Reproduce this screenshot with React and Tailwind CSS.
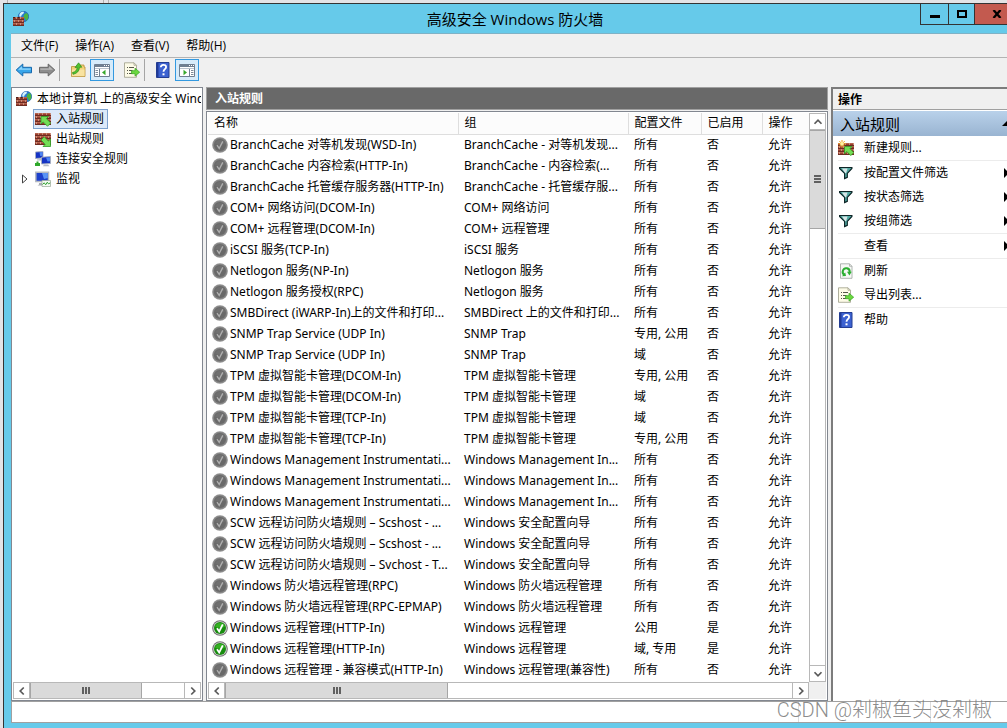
import React from "react";

const ANY = "所有";
const RULES = [
  ["BranchCache 对等机发现(WSD-In)", "BranchCache - 对等机发现...", ANY],
  ["BranchCache 内容检索(HTTP-In)", "BranchCache - 内容检索(...", ANY],
  ["BranchCache 托管缓存服务器(HTTP-In)", "BranchCache - 托管缓存服...", ANY],
  ["COM+ 网络访问(DCOM-In)", "COM+ 网络访问", ANY],
  ["COM+ 远程管理(DCOM-In)", "COM+ 远程管理", ANY],
  ["iSCSI 服务(TCP-In)", "iSCSI 服务", ANY],
  ["Netlogon 服务(NP-In)", "Netlogon 服务", ANY],
  ["Netlogon 服务授权(RPC)", "Netlogon 服务", ANY],
  ["SMBDirect (iWARP-In)上的文件和打印...", "SMBDirect 上的文件和打印...", ANY],
  ["SNMP Trap Service (UDP In)", "SNMP Trap", "专用, 公用"],
  ["SNMP Trap Service (UDP In)", "SNMP Trap", "域"],
  ["TPM 虚拟智能卡管理(DCOM-In)", "TPM 虚拟智能卡管理", "专用, 公用"],
  ["TPM 虚拟智能卡管理(DCOM-In)", "TPM 虚拟智能卡管理", "域"],
  ["TPM 虚拟智能卡管理(TCP-In)", "TPM 虚拟智能卡管理", "域"],
  ["TPM 虚拟智能卡管理(TCP-In)", "TPM 虚拟智能卡管理", "专用, 公用"],
  ["Windows Management Instrumentati...", "Windows Management In...", ANY],
  ["Windows Management Instrumentati...", "Windows Management In...", ANY],
  ["Windows Management Instrumentati...", "Windows Management In...", ANY],
  ["SCW 远程访问防火墙规则 – Scshost - ...", "Windows 安全配置向导", ANY],
  ["SCW 远程访问防火墙规则 – Scshost - ...", "Windows 安全配置向导", ANY],
  ["SCW 远程访问防火墙规则 – Svchost - T...", "Windows 安全配置向导", ANY],
  ["Windows 防火墙远程管理(RPC)", "Windows 防火墙远程管理", ANY],
  ["Windows 防火墙远程管理(RPC-EPMAP)", "Windows 防火墙远程管理", ANY],
  ["Windows 远程管理(HTTP-In)", "Windows 远程管理", "公用", true],
  ["Windows 远程管理(HTTP-In)", "Windows 远程管理", "域, 专用", true],
  ["Windows 远程管理 - 兼容模式(HTTP-In)", "Windows 远程管理(兼容性)", ANY],
];

function Svg({ children, className = "" }) {
  return (
    <svg viewBox="0 0 16 16" className={"h-4 w-4 shrink-0 " + className} aria-hidden="true">
      {children}
    </svg>
  );
}

function Bricks({ x = 0, y = 2, w = 16, h = 12 }) {
  const rows = [];
  for (let i = 0; i < h / 3; i++) {
    const top = y + i * 3;
    rows.push(<path key={"t" + i} d={`M${x} ${top + 0.5}H${x + w}`} stroke="#b5614d" />);
    rows.push(<path key={"h" + i} d={`M${x} ${top + 2.5}H${x + w}`} stroke="#6d2c22" />);
    for (let c = i % 2 ? 1.5 : 3.5; c < w; c += 4) {
      rows.push(<path key={i + "-" + c} d={`M${x + c} ${top}v2`} stroke="#d09a88" strokeWidth=".8" />);
    }
  }
  return (
    <g>
      <rect x={x} y={y} width={w} height={h} fill="#99402f" />
      {rows}
    </g>
  );
}

const FirewallIcon = () => (
  <Svg>
    <circle cx="10.5" cy="5.5" r="5.2" fill="#2878d2" stroke="#1b5aa6" strokeWidth=".6" />
    <path d="M7 2.2c1.500-1.500 3-1.600 4-1.200l-.6 1.800-1.600 1-.8 2-1.600-.4c-.3-1.300 0-2.300.6-3.200z" fill="#d5f1fa" />
    <path d="M12 2.500l2.200-.3c1.200 1.800 1.500 3.900.6 5.800l-1.800 2-1-2.400-1.500-1.500.4-1.800z" fill="#49b543" />
    <Bricks x={0} y={6} w={11} h={9} />
    <path d="M0 6h2v1.200H0zM4.500 6h2.200v1.200H4.500z" fill="#4a1f1a" />
  </Svg>
);

const GREEN = "#74dd55";
const InboundIcon = () => (
  <Svg>
    <Bricks />
    <path d="M6 5.500h7.500l-2 2.200 4.200 4.300-3.200 3.300-4.300-4.400L6 13z" fill={GREEN} stroke="#2f9a24" strokeWidth=".8" />
  </Svg>
);
const OutboundIcon = () => (
  <Svg>
    <Bricks />
    <path d="M15.500 15.500H8l2.200-2.200L6 9l3.200-3.200 4.200 4.300 2.100-2.100z" fill={GREEN} stroke="#2f9a24" strokeWidth=".8" />
  </Svg>
);
const NewRuleIcon = () => (
  <Svg>
    <Bricks y={3} />
    <path d="M6.500 6.500H14l-2 2.200 3.800 3.900-3 3-3.900-4-2.400 2.200z" fill={GREEN} stroke="#2f9a24" strokeWidth=".8" />
    <path d="M4 0v7.600M.2 3.800h7.600M1.300 1.100l5.400 5.400M6.700 1.100L1.300 6.500" stroke="#f0a01c" />
    <circle cx="4" cy="3.800" r="1.900" fill="#fff2a0" />
  </Svg>
);
const ConnectionIcon = () => (
  <Svg>
    <path d="M.5 1L8 .5v6.500l-7.500.500z" fill="#1533c4" stroke="#a8b0c0" strokeWidth=".9" />
    <path d="M4.500 1.300l3-.2v3.700l-2.300.2z" fill="#4e86f2" />
    <path d="M2 8.500l4-.5.500 1.500H2z" fill="#b5bac5" />
    <path d="M6.500 6.200l9-.7v7l-9 .5z" fill="#1533c4" stroke="#a8b0c0" strokeWidth=".9" />
    <path d="M11 6.500l4-.3v4l-2.500.3z" fill="#4e86f2" />
    <path d="M9 13.500h4l1.500 1.700H8z" fill="#b5bac5" />
    <path d="M0 15v-3h1.500v-1.500h2V12H5v3z" fill="#2fa82a" />
  </Svg>
);
const MonitorIcon = () => (
  <Svg>
    <path d="M.8 1.200h12.700v9.300H.8z" fill="#1c3fcb" stroke="#b4b9c2" strokeWidth="1.500" />
    <path d="M7 2h5.800v5L9 8z" fill="#5a93f5" />
    <path d="M4 12h4v1.500l1.500 1h-7L4 13.500z" fill="#a9adb4" />
    <path d="M7 9.500h8.500v6H7z" fill="#f4faf3" stroke="#9aa79a" strokeWidth=".7" />
    <path d="M7.500 13.500l1.700-1.700 1.500 2 1.600-2.600 1.200 1.700 1.700-1" fill="none" stroke="#35a435" />
  </Svg>
);
const BackIcon = () => (
  <svg viewBox="0 0 18 16" className="h-4 w-[18px]" aria-hidden="true">
    <path d="M1.200 8l6.600-6v3.300h8.700v5.500H7.800V14z" fill="#38a6ea" stroke="#1668ad" />
    <path d="M3 7.800l3.900-3.600v2.300h8.700v1.300z" fill="#92d6fb" />
  </svg>
);
const ForwardIcon = () => (
  <svg viewBox="0 0 18 16" className="h-4 w-[18px]" aria-hidden="true">
    <path d="M16.800 8l-6.600-6v3.300H1.500v5.500h8.700V14z" fill="#8d8d8d" stroke="#666" />
    <path d="M15 7.800l-3.900-3.600v2.300H2.400v1.300z" fill="#b9b9b9" />
  </svg>
);
const FolderUpIcon = () => (
  <Svg>
    <path d="M1.500 4.500h5l1-1.500H14v2h1v9.500H1.500z" fill="#f3d277" stroke="#b8903a" strokeWidth=".8" />
    <path d="M2 7.500h12.500v6.600H2z" fill="#f9e3a0" />
    <path d="M2.500 10.500c3-.5 4.500-2.500 4.700-5.200L5 5.500 8.600.8l3.200 4.400-2.300.1c-.3 4-2.500 6.200-6.500 7z" fill="#52c32f" stroke="#2d8d1d" strokeWidth=".7" />
  </Svg>
);
const PanelIcon = ({ right }) => (
  <Svg>
    <path d="M.5 2.500h15v12H.5z" fill="#fff" stroke="#6f7f91" />
    <path d="M1 4h14" stroke="#6f7f91" strokeWidth="2" />
    <path d="M10 3.500h1m1 0h1m1 0h1" stroke="#fff" />
    <path d="M1 6.500h14" stroke="#b9c3cd" />
    <path d={right ? "M10.500 7v7" : "M5.500 7v7"} stroke="#6f7f91" />
    <path d={right ? "M12 8.500h2.500m-2.500 2h2.500m-2.500 2h2.500" : "M1.500 8.500H4m-2.500 2H4m-2.500 2H4"} stroke="#7d8b9a" />
    <path d={right ? "M4.500 7.800v5.400L8 10.500z" : "M11.500 7.800v5.400L8 10.500z"} fill="#36a82b" />
  </Svg>
);
const ExportIcon = () => (
  <Svg>
    <path d="M.5.8H10l2.500 2.500v12H.5z" fill="#fdfbe7" stroke="#9c9c88" strokeWidth=".8" />
    <path d="M10 .8v2.500h2.500" fill="none" stroke="#9c9c88" strokeWidth=".7" />
    <path d="M3 5.500h1m1 0h5M3 8.500h1m1 0h3.500M3 11.500h1m1 0h3.500" stroke="#55564a" />
    <path d="M7.500 8.700H11V6.200l4.700 4-4.700 4v-2.500H7.500z" fill="#6bd83f" stroke="#36a321" strokeWidth=".7" />
  </Svg>
);
const RefreshIcon = () => (
  <Svg>
    <path d="M2.500.8h9L14 3.300v12H2.500z" fill="#f7f8f6" stroke="#9da3a0" strokeWidth=".8" />
    <path d="M11.500.8v2.500H14" fill="none" stroke="#9da3a0" strokeWidth=".7" />
    <path d="M6.500 11.800A3.500 3.500 0 1 1 11.700 9" fill="none" stroke="#2cae32" strokeWidth="2" />
    <path d="M9 8.800h4.700l-2.300 3.600z" fill="#2cae32" />
    <path d="M4 13.200l4-.2-.8-3.600z" fill="#2cae32" />
  </Svg>
);
const HelpIcon = () => (
  <Svg>
    <path d="M1.500.5H14v15H1.500z" fill="#3c62d1" stroke="#233d92" />
    <path d="M2 1h1.500v14H2z" fill="#203a98" />
    <path d="M5.800 5.200c0-3 5.300-3.200 5.300-.2 0 2.100-2.600 2.200-2.600 4.700" fill="none" stroke="#fff" strokeWidth="1.800" />
    <path d="M7.500 11.300h2v2h-2z" fill="#fff" />
  </Svg>
);
const FilterIcon = () => (
  <Svg>
    <path d="M1 2h13v1.500L9.200 8.500v4l-2.900 1.300V8.500L1 3.500z" fill="#4fa8a2" />
    <path d="M4 3.500h5.500L8 8.500 7 8z" fill="#d9e6e6" />
    <path d="M1.600 2.500h12.300v1L9.300 8.400v4l-2.700 1.200V8.400L1.600 3.500z" fill="none" stroke="#0f2527" strokeWidth="1.200" />
  </Svg>
);
const RuleIcon = ({ on }) => (
  <Svg>
    <circle cx="8" cy="8" r="7.800" fill={on ? "#707070" : "#8f8f8f"} />
    <circle cx="8" cy="8" r="6.800" fill={on ? "#d6d6d6" : "#808080"} />
    <circle cx="8" cy="8" r="6" fill={on ? "#178c0e" : "#696969"} />
    <path d="M3 6.500a5.300 5.300 0 0 1 10 0c-3 1.600-7 1.600-10 0z" fill={on ? "#35b022" : "#707070"} />
    <path d="M5 8.200l2.200 3.200 3.600-7" fill="none" stroke={on ? "#fff" : "#b0b0b0"} strokeWidth={on ? 1.8 : 1.3} />
  </Svg>
);

const ARROWS = { left: "M10 4L6 8l4 4", right: "M6 4l4 4-4 4", up: "M4 10l4-4 4 4", down: "M4 6l4 4 4-4" };

function ScrollArrow({ dir, label }) {
  return (
    <button aria-label={label} className="flex h-[17px] w-[17px] shrink-0 items-center justify-center border border-[#b8b8b8] bg-white">
      <svg viewBox="0 0 16 16" className="h-[14px] w-[14px]" aria-hidden="true">
        <path d={ARROWS[dir]} fill="none" stroke="#5a5a5a" strokeWidth="2" />
      </svg>
    </button>
  );
}

function HScroll({ thumb }) {
  return (
    <div className="flex h-[17px] min-w-0 flex-1 bg-white">
      <ScrollArrow dir="left" label="向左滚动" />
      <div className="flex flex-1 border-y border-[#b8b8b8]">
        <div className={"flex items-center justify-center gap-px border-x border-[#a6a6a6] bg-[#dadada] " + thumb}>
          <i className="h-[7px] w-0.5 bg-[#606060]" />
          <i className="h-[7px] w-0.5 bg-[#606060]" />
          <i className="h-[7px] w-0.5 bg-[#606060]" />
        </div>
      </div>
      <ScrollArrow dir="right" label="向右滚动" />
    </div>
  );
}

function VScroll() {
  return (
    <div className="flex w-[17px] shrink-0 flex-col bg-white">
      <ScrollArrow dir="up" label="向上滚动" />
      <div className="flex-1 border-x border-[#b8b8b8]">
        <div className="flex h-[18.5%] flex-col items-center justify-center gap-px border-y border-[#a6a6a6] bg-[#dadada]">
          <i className="h-0.5 w-[7px] bg-[#606060]" />
          <i className="h-0.5 w-[7px] bg-[#606060]" />
          <i className="h-0.5 w-[7px] bg-[#606060]" />
        </div>
      </div>
      <ScrollArrow dir="down" label="向下滚动" />
    </div>
  );
}

function TreeItem({ icon, label, selected, expander }) {
  return (
    <li className="flex h-5 items-center">
      <span className="flex w-5 shrink-0 items-center justify-end pr-[5px]">
        {expander && (
          <svg viewBox="0 0 6 10" className="h-[10px] w-[6px]" aria-hidden="true">
            <path d="M.5 1v8L5 5z" fill="#fff" stroke="#444" />
          </svg>
        )}
      </span>
      <button
        className={
          "flex h-5 items-center gap-[5px] border px-px " +
          (selected ? "border-[#7da2ce] bg-[#dce9f9]" : "border-transparent")
        }
      >
        {icon}
        <span className="pr-[2px]">{label}</span>
      </button>
    </li>
  );
}

function ActionItem({ icon, label, more }) {
  return (
    <button className="flex h-6 w-full items-center gap-[10px] pl-[5px] text-left">
      {icon || <span className="w-4" />}
      <span className="flex-1">{label}</span>
      {more && (
        <svg viewBox="0 0 3 10" className="h-[10px] w-[3px]" aria-hidden="true">
          <path d="M0 0l3 3v4l-3 3z" fill="#000" />
        </svg>
      )}
    </button>
  );
}

const Rule = () => <hr className="ml-[5px] border-t border-[#ececec]" />;
const ToolSep = ({ className = "" }) => <span className={"h-[22px] w-px bg-[#a5a5a5] " + className} />;

export default function App() {
  return (
    <div className="relative flex h-screen w-full flex-col overflow-hidden bg-[#e3e3e6] font-['Noto_Sans','Noto_Sans_CJK_SC',sans-serif] text-xs leading-5 text-black">
      <div className="flex h-[3px] shrink-0">
        <span className="w-2 border-r border-[#b0b0b0]" />
        <span className="w-24 border-r border-[#b0b0b0]" />
        <span className="w-[5px] border-r border-[#b0b0b0]" />
      </div>
      <main className="ml-[3px] flex min-h-0 flex-1 flex-col border-t border-l border-[#333] bg-[#66caea] pb-[5px]">
        <header className="flex h-[29px] shrink-0 items-start">
          <div className="flex h-full w-[106px] items-center pl-[9px]">
            <FirewallIcon />
          </div>
          <h1 className="flex-1 self-center text-center font-['Open_Sans','Noto_Sans_CJK_SC',sans-serif] text-[15px] leading-6">
            高级安全 Windows 防火墙
          </h1>
          <div className="flex h-[21px] border-b border-l border-[#333]">
            <button aria-label="最小化" className="flex w-7 items-center justify-center border-r border-[#333]">
              <span className="mt-1 h-[3px] w-[10px] bg-black" />
            </button>
            <button aria-label="最大化" className="flex w-[26px] items-center justify-center border-r border-[#333]">
              <span className="h-2 w-[10px] border-2 border-black" />
            </button>
            <button aria-label="关闭" className="flex w-8 items-center justify-end bg-[#c35a4f] pr-[5px]">
              <svg viewBox="0 0 10 8" className="h-2 w-[10px]" aria-hidden="true">
                <path d="M1.500 0l7 8M8.500 0l-7 8" stroke="#000" strokeWidth="2.300" />
              </svg>
            </button>
          </div>
        </header>

        <div className="ml-[7px] flex min-h-0 flex-1 flex-col bg-[#f0f0f0]">
          <nav className="flex h-[25px] shrink-0 items-center gap-[17px] border-t border-b border-t-[#7fb2c6] border-b-[#b3b3b3] pt-px pl-[10px] font-['Open_Sans','Noto_Sans_CJK_SC',sans-serif]">
            <button>文件(F)</button>
            <button>操作(A)</button>
            <button>查看(V)</button>
            <button>帮助(H)</button>
          </nav>
          <div className="flex h-[29px] shrink-0 items-start pt-px pl-1">
            <div className="flex h-[22px] items-center">
              <button aria-label="后退" className="mr-[5px]"><BackIcon /></button>
              <button aria-label="前进"><ForwardIcon /></button>
              <ToolSep className="ml-[3px] mr-[10px]" />
              <button aria-label="向上一级"><FolderUpIcon /></button>
              <button aria-label="显示/隐藏控制台树" className="ml-1 flex h-[22px] w-6 items-center justify-center border border-[#3399e0] bg-[#d6ebfa]"><PanelIcon /></button>
              <button aria-label="导出列表" className="ml-[10px]"><ExportIcon /></button>
              <ToolSep className="ml-1 mr-[10px]" />
              <button aria-label="帮助"><HelpIcon /></button>
              <button aria-label="显示/隐藏操作窗格" className="ml-1 flex h-[22px] w-6 items-center justify-center border border-[#3399e0] bg-[#d6ebfa]"><PanelIcon right /></button>
            </div>
          </div>

          <div className="flex min-h-0 flex-1 gap-[3px]">
            <section aria-label="控制台树" className="flex w-48 shrink-0 flex-col overflow-hidden border border-[#828790] bg-white p-px">
              <div className="min-h-0 flex-1 overflow-hidden">
                <button className="flex h-5 items-center gap-[5px] pl-[3px] whitespace-nowrap">
                  <FirewallIcon />
                  <span>本地计算机 上的高级安全 Wind</span>
                </button>
                <ul>
                  <TreeItem icon={<InboundIcon />} label="入站规则" selected />
                  <TreeItem icon={<OutboundIcon />} label="出站规则" />
                  <TreeItem icon={<ConnectionIcon />} label="连接安全规则" />
                  <TreeItem icon={<MonitorIcon />} label="监视" expander />
                </ul>
              </div>
              <div className="flex"><HScroll thumb="w-[73%]" /></div>
            </section>

            <section className="flex min-w-0 flex-1 flex-col">
              <h2 className="h-[23px] shrink-0 border border-[#a0a0a0] bg-[#696969] pl-2 leading-[22px] font-bold text-white">入站规则</h2>
              <div className="mt-px flex min-h-0 flex-1 flex-col border border-[#828790] bg-white p-px">
                <div className="flex min-h-0 flex-1">
                  <div className="min-w-0 flex-1 overflow-hidden">
                    <table className="w-full table-fixed border-collapse text-left whitespace-nowrap">
                      <colgroup>
                        <col className="w-[250px]" />
                        <col className="w-[170px]" />
                        <col className="w-[73px]" />
                        <col className="w-[61px]" />
                        <col />
                      </colgroup>
                      <thead>
                        <tr className="h-[21px]">
                          {["名称", "组", "配置文件", "已启用", "操作"].map((h) => (
                            <th key={h} className="border-r border-b border-[#dedede] bg-[#fcfcfc] p-0 pl-[6px] font-normal last:border-r-0">{h}</th>
                          ))}
                        </tr>
                      </thead>
                      <tbody>
                        {RULES.map(([name, group, profile, on], i) => (
                          <tr key={i} className="h-[21px]">
                            <td className="p-0 pl-1">
                              <span className="flex items-center gap-[2px]"><RuleIcon on={on} />{name}</span>
                            </td>
                            <td className="p-0 pl-[6px]">{group}</td>
                            <td className="p-0 pl-[6px]">{profile}</td>
                            <td className="p-0 pl-[6px]">{on ? "是" : "否"}</td>
                            <td className="p-0 pl-[6px]">允许</td>
                          </tr>
                        ))}
                      </tbody>
                    </table>
                  </div>
                  <VScroll />
                </div>
                <div className="flex shrink-0">
                  <HScroll thumb="w-[39.4%]" />
                  <span className="w-[17px] bg-[#f0f0f0]" />
                </div>
              </div>
            </section>

            <aside className="flex w-[176px] shrink-0 flex-col border-t-2 border-l-2 border-[#7c7c7c] bg-white">
              <h2 className="h-[21px] shrink-0 border-b border-[#a0a0a0] bg-[#f0f0f0] pl-[5px] leading-[22px] font-bold">操作</h2>
              <button className="mt-px flex h-[25px] shrink-0 items-center justify-between bg-linear-to-b from-[#b9d1ea] to-[#99b4d1] pl-[7px] text-[15px]">
                入站规则
                <svg viewBox="0 0 5 5" className="h-[5px] w-[5px]" aria-hidden="true"><path d="M5 0v5H0z" /></svg>
              </button>
              <ActionItem icon={<NewRuleIcon />} label="新建规则..." />
              <Rule />
              <ActionItem icon={<FilterIcon />} label="按配置文件筛选" more />
              <ActionItem icon={<FilterIcon />} label="按状态筛选" more />
              <ActionItem icon={<FilterIcon />} label="按组筛选" more />
              <Rule />
              <ActionItem label="查看" more />
              <Rule />
              <ActionItem icon={<RefreshIcon />} label="刷新" />
              <ActionItem icon={<ExportIcon />} label="导出列表..." />
              <Rule />
              <ActionItem icon={<HelpIcon />} label="帮助" />
            </aside>
          </div>

          <footer className="flex h-[22px] shrink-0 justify-end border border-r-0 border-[#a0a0a0] bg-white">
            <span className="w-[133px] border-x border-[#dcdcdc]" />
            <span className="w-[76px]" />
          </footer>
        </div>
      </main>
      <p className="absolute right-[15px] bottom-1 font-['Roboto','Noto_Sans_CJK_SC',sans-serif] text-xl leading-7 font-light text-[#777]/85">
        CSDN @剁椒鱼头没剁椒
      </p>
    </div>
  );
}
